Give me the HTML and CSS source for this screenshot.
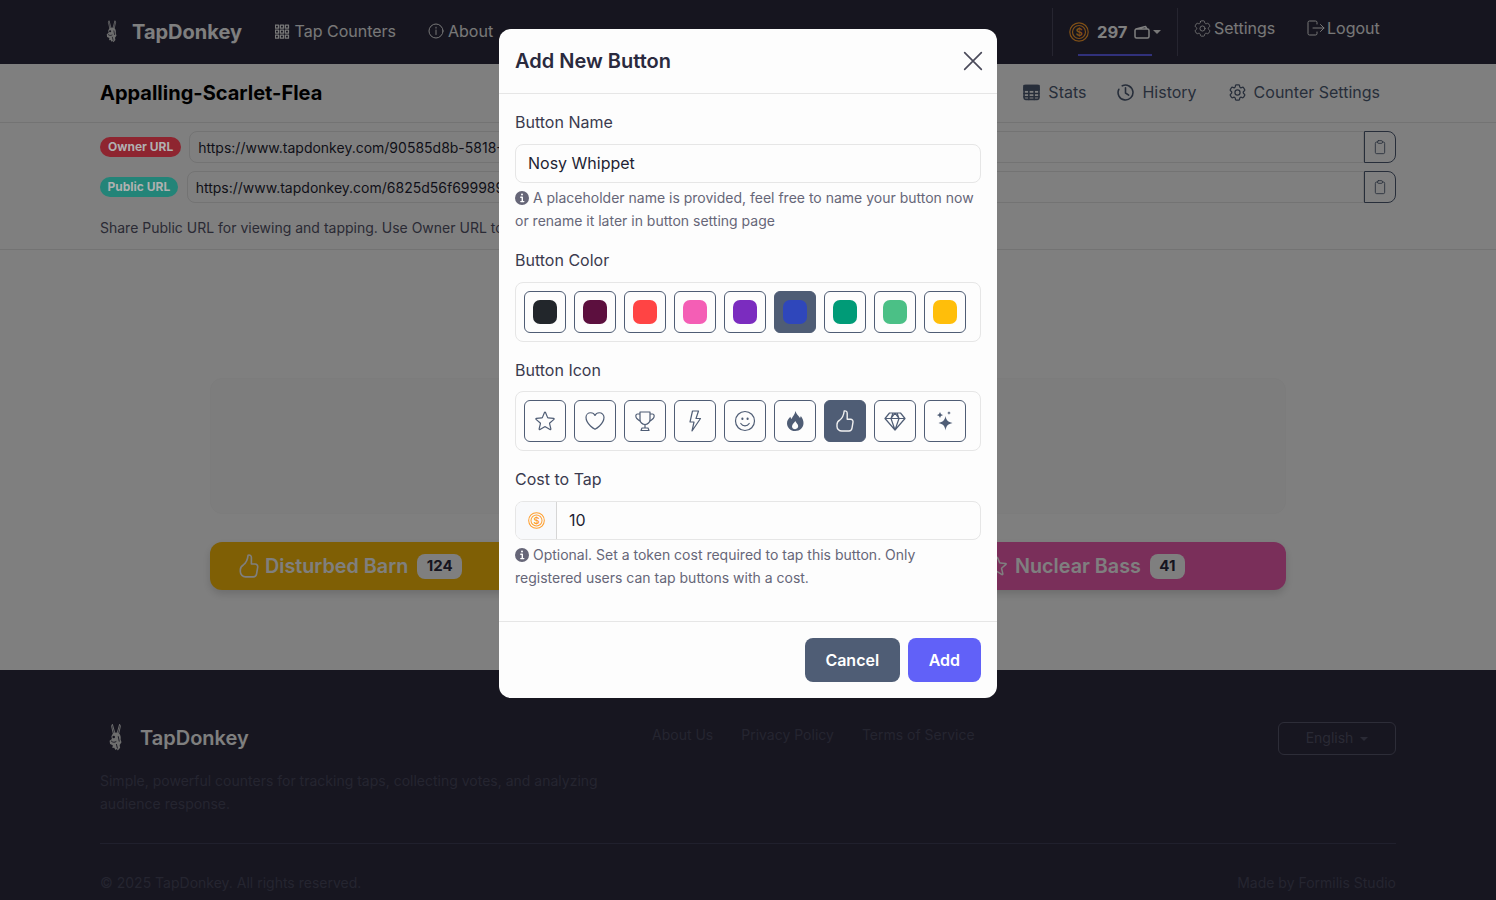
FILE: index.html
```html
<!DOCTYPE html>
<html lang="en">
<head>
    <meta charset="UTF-8">
    <meta name="viewport" content="width=device-width, initial-scale=1.0">
    <title>TapDonkey</title>
    <link rel="stylesheet" href="styles.css">
</head>
<body>
    <!-- shared icons -->
    <svg class="icon-defs" width="0" height="0">
        <symbol id="i-gear" viewBox="2 2 20 20"><path d="M9.594 3.94c.09-.542.56-.94 1.11-.94h2.593c.55 0 1.02.398 1.11.94l.213 1.281c.063.374.313.686.645.87.074.04.147.083.22.127.325.196.72.257 1.075.124l1.217-.456a1.125 1.125 0 0 1 1.37.49l1.296 2.247a1.125 1.125 0 0 1-.26 1.431l-1.003.827c-.293.241-.438.613-.43.992a7.723 7.723 0 0 1 0 .255c-.008.378.137.75.43.991l1.004.827c.424.35.534.955.26 1.43l-1.298 2.247a1.125 1.125 0 0 1-1.369.491l-1.217-.456c-.355-.133-.75-.072-1.076.124a6.47 6.47 0 0 1-.22.128c-.331.183-.581.495-.644.869l-.213 1.281c-.09.543-.56.94-1.11.94h-2.594c-.55 0-1.019-.398-1.11-.94l-.213-1.281c-.062-.374-.312-.686-.644-.87a6.52 6.52 0 0 1-.22-.127c-.325-.196-.72-.257-1.076-.124l-1.217.456a1.125 1.125 0 0 1-1.369-.49l-1.297-2.247a1.125 1.125 0 0 1 .26-1.431l1.004-.827c.292-.24.437-.613.43-.991a6.932 6.932 0 0 1 0-.255c.007-.38-.138-.751-.43-.992l-1.004-.827a1.125 1.125 0 0 1-.26-1.43l1.297-2.247a1.125 1.125 0 0 1 1.37-.491l1.216.456c.356.133.751.072 1.076-.124.072-.044.146-.086.22-.128.332-.183.582-.495.644-.869l.214-1.28Z"/><circle cx="12" cy="12" r="3"/></symbol>
        <symbol id="i-clip" viewBox="0 0 24 24"><path d="M8.500 4.500H7a2 2 0 0 0-2 2V20a2 2 0 0 0 2 2h10a2 2 0 0 0 2-2V6.500a2 2 0 0 0-2-2h-1.500"/><rect x="8.500" y="2.500" width="7" height="4" rx="1"/></symbol>
        <symbol id="i-thumb" viewBox="0 0 24 24"><path d="M11.200 2c1.500-.5 3 .4 3 2.200v6h3.400c1.600 0 2.700 1.400 2.400 3l-1 6c-.3 1.600-1.600 2.800-3 2.800H8.800C6.300 22 4 20 4 17.400v-2c0-2 1-3.400 3-4.600C9.500 9 10.700 6 11.200 2Z"/></symbol>
        <symbol id="i-star" viewBox="0 0 24 24"><path d="M11.480 3.499a.562.562 0 0 1 1.040 0l2.125 5.111a.563.563 0 0 0 .475.345l5.518.442c.499.04.701.663.321.988l-4.204 3.602a.563.563 0 0 0-.182.557l1.285 5.385a.562.562 0 0 1-.84.61l-4.725-2.885a.562.562 0 0 0-.586 0L6.982 20.540a.562.562 0 0 1-.84-.61l1.285-5.386a.562.562 0 0 0-.182-.557l-4.204-3.602a.562.562 0 0 1 .321-.988l5.518-.442a.563.563 0 0 0 .475-.345L11.480 3.500Z"/></symbol>
        <symbol id="i-info" viewBox="1 1 14 14"><circle cx="8" cy="8" r="7" fill="currentColor" stroke="none"/><circle cx="8" cy="4.600" r="1" fill="#fff" stroke="none"/><path d="M6.800 7.200H8.300V11.400M6.800 11.600H9.800" stroke="#fff" stroke-width="1.400" fill="none"/></symbol>
        <symbol id="i-donkey" viewBox="0 0 24 32">
            <path d="M8.200 1.500 10.500 10 9 11 7.300 3.500ZM15.800 1.500 13.500 10 15 11 16.700 3.500Z" fill="none" stroke="#e8e8e8" stroke-width="1"/>
            <path d="M8.500 11c2-1.500 5-1.500 7 0 1.500 1.500 2 4 1.500 6.500l1 3-2 3 .5 3-2.500 3-1-1.500-1.500 1-1.500-2.500-2 .5.5-3-3-1.500-.5-3.500 2.500-2-.5-3Z" fill="#dcdcdc" stroke="none"/>
            <circle cx="9.500" cy="15" r="1.400" fill="#2c2a3e" stroke="none"/>
            <path d="M7 19.500c1.500 1.500 3.500 1.500 5 .5M14.500 14.500l1 5M12.500 23l1 4" fill="none" stroke="#2c2a3e" stroke-width="1"/>
        </symbol>
    </svg>

    <nav class="topbar">
        <div class="topbar-left">
            <a class="brand">
                <svg width="18" height="24"><use href="#i-donkey"/></svg>
                <span>TapDonkey</span>
            </a>
            <a class="top-link">
                <svg class="icon-sm" viewBox="0 0 16 16" width="16" height="16">
                    <path d="M1.500 2h2.500v2.500h-2.500zM5.500 2h2.500v2.500h-2.500zM9.500 2h2.500v2.500h-2.500zM1.500 6h2.500v2.500h-2.500zM5.500 6h2.500v2.500h-2.500zM9.500 6h2.500v2.500h-2.500zM1.500 10h2.500v2.500h-2.500zM5.500 10h2.500v2.500h-2.500zM9.500 10h2.500v2.500h-2.500z" transform="translate(-1.500 -.5) scale(1.250)"/>
                </svg>
                Tap Counters
            </a>
            <a class="top-link">
                <svg class="icon-sm" viewBox="0 0 16 16" width="16" height="16">
                    <circle cx="8" cy="8" r="7"/><path d="M8 7v4.500M8 4.200v1"/>
                </svg>
                About
            </a>
        </div>
        <div class="topbar-right">
            <div class="wallet">
                <svg class="coin" viewBox="0 0 20 20" width="20" height="20">
                    <circle cx="10" cy="10" r="9.200"/><circle cx="10" cy="10" r="6.500"/>
                    <text x="10" y="13.700" text-anchor="middle">$</text>
                </svg>
                <span class="wallet-num">297</span>
                <svg class="wallet-icon" viewBox="0 0 16 14" width="16" height="14">
                    <path d="M1 5.500a1.500 1.500 0 0 1 1.500-1.500H13.500a1.500 1.500 0 0 1 1.500 1.500V11.500a1.500 1.500 0 0 1-1.500 1.500H2.500A1.500 1.500 0 0 1 1 11.500ZM2 4 11.500 1.500l1.500 2.500"/>
                </svg>
                <span class="caret"></span>
            </div>
            <a class="top-link top-link-right">
                <svg class="icon-sm" width="17" height="17"><use href="#i-gear"/></svg>
                Settings
            </a>
            <a class="top-link top-link-right">
                <svg class="icon-sm" viewBox="0 0 18 16" width="18" height="16">
                    <path d="M10 4V2.500A1.500 1.500 0 0 0 8.500 1H2.500A1.500 1.500 0 0 0 1 2.500V13.500A1.500 1.500 0 0 0 2.500 15H8.500A1.500 1.500 0 0 0 10 13.500V12M6 8h11M13.500 4.500 17 8l-3.500 3.500"/>
                </svg>
                Logout
            </a>
        </div>
    </nav>

    <header class="counter-head">
        <h1>Appalling-Scarlet-Flea</h1>
        <div class="counter-tabs">
            <a class="tab">
                <svg viewBox="0 0 16 16" width="17" height="17"><rect x="1" y="1.500" width="14" height="13" rx="1.500"/><path d="M1 5.500h14M1 9h14M1 12h14M5.500 5.500v9M10.500 5.500v9"/><path class="tab-fill" d="M1 1.500h14v4H1z"/></svg>
                Stats
            </a>
            <a class="tab">
                <svg viewBox="0 0 16 16" width="17" height="17"><path d="M5 1.700A7 7 0 1 1 1.700 5"/><path d="M8 3.500V8.500l3 2"/></svg>
                History
            </a>
            <a class="tab">
                <svg width="17" height="17"><use href="#i-gear"/></svg>
                Counter Settings
            </a>
        </div>
    </header>

    <section class="share">
        <div class="url-row">
            <span class="badge badge-owner">Owner URL</span>
            <input class="url-input" type="text" value="https://www.tapdonkey.com/90585d8b-5818-4e0a-9c1d-6f2b7a3e1c44">
            <button class="copy-btn"><svg width="16" height="16"><use href="#i-clip"/></svg></button>
        </div>
        <div class="url-row">
            <span class="badge badge-public">Public URL</span>
            <input class="url-input" type="text" value="https://www.tapdonkey.com/6825d56f699989a1c2e40b7d">
            <button class="copy-btn"><svg width="16" height="16"><use href="#i-clip"/></svg></button>
        </div>
        <p class="share-note">Share Public URL for viewing and tapping. Use Owner URL to manage this counter, keep it safe as it contains login information.</p>
    </section>

    <main class="counter-main">
        <div class="chart-box"></div>
        <div class="tap-grid">
            <button class="tap-btn tap-amber">
                <svg width="26" height="26"><use href="#i-thumb"/></svg>
                <span>Disturbed Barn</span>
                <span class="tap-count">124</span>
            </button>
            <button class="tap-btn tap-pink">
                <svg width="24" height="24"><use href="#i-star"/></svg>
                <span>Nuclear Bass</span>
                <span class="tap-count">41</span>
            </button>
        </div>
    </main>

    <footer class="footer">
        <div class="footer-top">
            <div class="footer-about">
                <div class="footer-brand">
                    <svg width="22" height="30"><use href="#i-donkey"/></svg>
                    <span>TapDonkey</span>
                </div>
                <p>Simple, powerful counters for tracking taps, collecting votes, and analyzing audience response.</p>
            </div>
            <div class="footer-links">
                <a>About Us</a>
                <a>Privacy Policy</a>
                <a>Terms of Service</a>
            </div>
            <button class="lang-btn">English <span class="caret"></span></button>
        </div>
        <div class="footer-bottom">
            <span>© 2025 TapDonkey. All rights reserved.</span>
            <span>Made by Formilis Studio</span>
        </div>
    </footer>

    <div class="backdrop"></div>

    <div class="modal">
        <div class="modal-head">
            <h2>Add New Button</h2>
            <button class="modal-close">
                <svg viewBox="0 0 18 18" width="20" height="20"><path d="M1.500 1.500l15 15M16.500 1.500l-15 15"/></svg>
            </button>
        </div>
        <div class="modal-body">
            <div class="field">
                <label>Button Name</label>
                <input class="text-input" type="text" value="Nosy Whippet">
                <p class="help"><svg width="14" height="14"><use href="#i-info"/></svg> A placeholder name is provided, feel free to name your button now or rename it later in button setting page</p>
            </div>
            <div class="field">
                <label>Button Color</label>
                <div class="picker">
                    <button class="pick"><span class="swatch sw-dark"></span></button>
                    <button class="pick"><span class="swatch sw-plum"></span></button>
                    <button class="pick"><span class="swatch sw-red"></span></button>
                    <button class="pick"><span class="swatch sw-pink"></span></button>
                    <button class="pick"><span class="swatch sw-purple"></span></button>
                    <button class="pick active"><span class="swatch sw-blue"></span></button>
                    <button class="pick"><span class="swatch sw-teal"></span></button>
                    <button class="pick"><span class="swatch sw-green"></span></button>
                    <button class="pick"><span class="swatch sw-yellow"></span></button>
                </div>
            </div>
            <div class="field">
                <label class="label-tight">Button Icon</label>
                <div class="picker">
                    <button class="pick"><svg width="24" height="24"><use href="#i-star"/></svg></button>
                    <button class="pick"><svg viewBox="0 0 24 24" width="24" height="24"><path d="M21 8.250c0-2.485-2.099-4.500-4.688-4.500-1.935 0-3.597 1.126-4.312 2.733-.715-1.607-2.377-2.733-4.313-2.733C5.100 3.750 3 5.765 3 8.250c0 7.220 9 12 9 12s9-4.780 9-12Z"/></svg></button>
                    <button class="pick"><svg viewBox="0 0 24 24" width="24" height="24"><path d="M7 3h10v7.500a5 5 0 0 1-10 0ZM7 5H4.500C2.500 5 2.300 8 3.800 9.500 4.800 10.500 6 11.500 7.500 12.500M17 5h2.500c2 0 2.200 3 .7 4.500-1 1-2.200 2-3.700 3M12 15.500V19M9 19h6l1 2.500H8Z"/></svg></button>
                    <button class="pick"><svg viewBox="0 0 24 24" width="24" height="24"><path d="M15.500 2H9.500L7 13h4l-2 9 8.500-12.500h-4.500Z"/></svg></button>
                    <button class="pick"><svg viewBox="0 0 24 24" width="24" height="24"><circle cx="12" cy="12" r="9.500"/><path d="M16.200 14.500a5 5 0 0 1-8.400 0"/><path class="dot" d="M8.300 9.800a1.100 1.300 0 1 0 2.200 0 1.100 1.300 0 1 0-2.200 0ZM13.500 9.800a1.100 1.300 0 1 0 2.200 0 1.100 1.300 0 1 0-2.200 0Z"/></svg></button>
                    <button class="pick"><svg viewBox="0 0 24 24" width="24" height="24"><path class="dot" fill-rule="evenodd" d="M12.500 2c.6 3 3 4.600 4.500 7 .4-.6.700-1.300.8-2 1.800 2.200 2.700 4.700 2.700 7 0 4.500-3.500 8-8.300 8S4 18.500 4 14.200c0-2.700 1.500-4.700 3.300-6.500 .3 1 .6 1.700 1.200 2.300C9.700 7.500 12 5 12.500 2ZM12.300 12c-.3 1.400-3.300 3-3.300 5.200 0 1.800 1.400 3 3.100 3s3.100-1.300 3.100-3.100c0-2.100-2.300-3.200-2.900-5.100Z"/></svg></button>
                    <button class="pick active"><svg width="24" height="24"><use href="#i-thumb"/></svg></button>
                    <button class="pick"><svg viewBox="0 0 24 24" width="24" height="24"><path d="M6.500 4h11L22 9.500 12 21 2 9.500ZM2 9.500h20M8 9.500 12 21l4-11.500M8 9.500 10 4M16 9.500 14 4M8 9.500 12 4.200l4 5.300"/></svg></button>
                    <button class="pick"><svg viewBox="0 0 24 24" width="24" height="24"><path class="dot" d="M12.500 7c.7 4.200 2.600 6.100 7 7-4.400.9-6.300 2.800-7 7.500-.7-4.700-2.600-6.600-7-7.500 4.400-.9 6.300-2.800 7-7ZM7 2.700c.4 2 1.300 2.900 3.300 3.300-2 .4-2.900 1.300-3.300 3.300-.4-2-1.300-2.900-3.300-3.300 2-.4 2.900-1.300 3.300-3.300ZM16 2c.2 1.200.8 1.800 2 2-1.200.2-1.800.8-2 2-.2-1.200-.8-1.800-2-2 1.200-.2 1.800-.8 2-2Z"/></svg></button>
                </div>
            </div>
            <div class="field field-last">
                <label>Cost to Tap</label>
                <div class="input-group">
                    <span class="input-addon">
                        <svg class="coin coin-sm" viewBox="0 0 20 20" width="17" height="17">
                            <circle cx="10" cy="10" r="9.200"/><circle cx="10" cy="10" r="6.500"/>
                            <text x="10" y="13.700" text-anchor="middle">$</text>
                        </svg>
                    </span>
                    <input class="group-input" type="text" value="10">
                </div>
                <p class="help"><svg width="14" height="14"><use href="#i-info"/></svg> Optional. Set a token cost required to tap this button. Only registered users can tap buttons with a cost.</p>
            </div>
        </div>
        <div class="modal-foot">
            <button class="btn btn-cancel">Cancel</button>
            <button class="btn btn-add">Add</button>
        </div>
    </div>
</body>
</html>
```

FILE: styles.css
```css
* {
    box-sizing: border-box;
}
html, body {
    margin: 0;
    padding: 0;
}
body {
    font-family: Inter, "Liberation Sans", sans-serif;
    background-color: #fff;
    color: #1f1f33;
    position: relative;
}
svg {
    fill: none;
    stroke: currentColor;
    stroke-width: 1.5;
    stroke-linecap: round;
    stroke-linejoin: round;
    flex-shrink: 0;
}
.icon-defs {
    position: absolute;
}
button {
    font-family: inherit;
    cursor: pointer;
}

/* top nav */
.topbar {
    height: 64px;
    background-color: #2c2a3e;
    padding: 0 100px;
    display: flex;
    justify-content: space-between;
    color: #f0f0f0;
}
.topbar-left {
    display: flex;
    align-items: center;
}
.brand {
    display: flex;
    align-items: center;
    gap: 11px;
    padding-left: 3px;
    font-size: 20px;
    font-weight: 700;
    color: #fff;
    margin-right: 32.5px;
}
.top-link {
    display: flex;
    align-items: center;
    gap: 4px;
    font-size: 16px;
    color: #f0f0f0;
    margin-right: 32px;
    margin-top: -2px;
}
.icon-sm {
    stroke-width: 1;
}
.topbar-right {
    display: flex;
    align-items: center;
}
.wallet {
    height: 48px;
    margin-top: 8px;
    margin-bottom: 8px;
    border-left: 1px solid #4c4a60;
    border-right: 1px solid #4c4a60;
    padding: 0 16px;
    width: 126px;
    display: flex;
    align-items: center;
    position: relative;
}
.wallet::after {
    content: "";
    position: absolute;
    left: 25px;
    bottom: 0;
    width: 74px;
    height: 2px;
    background-color: #6363f7;
}
.coin {
    stroke: #ff9f2e;
    stroke-width: 1.2;
}
.coin text {
    fill: #ff9f2e;
    stroke: none;
    font-size: 11px;
    font-weight: 600;
    font-family: Inter, sans-serif;
}
.wallet-num {
    font-size: 16.5px;
    font-weight: 700;
    color: #fff;
    margin-left: 8px;
    margin-right: 7px;
}
.wallet-icon {
    stroke: #fff;
}
.caret {
    display: inline-block;
    width: 0;
    height: 0;
    border-left: 4px solid transparent;
    border-right: 4px solid transparent;
    border-top: 4px solid currentColor;
    margin-left: 3px;
    vertical-align: middle;
}
.top-link-right {
    margin: -8px 0 0 16px;
    gap: 3px;
    width: 97px;
}
.top-link-right:last-child {
    margin-left: 16px;
    width: 73px;
    margin-right: 16px;
    gap: 2px;
}

/* counter header */
.counter-head {
    height: 59px;
    padding: 0 100px;
    display: flex;
    align-items: center;
    justify-content: space-between;
    border-bottom: 1px solid #e6e6e6;
    background-color: #fff;
}
.counter-head h1 {
    margin: 0;
    font-size: 20px;
    font-weight: 700;
    color: #000;
}
.counter-tabs {
    display: flex;
    gap: 32px;
    padding-right: 16px;
    padding-bottom: 2px;
}
.tab {
    display: flex;
    align-items: center;
    gap: 8px;
    font-size: 16px;
    color: #4f5d75;
}
.tab:first-child {
    margin-right: -1px;
}
.tab-fill {
    fill: currentColor;
}

/* share urls */
.share {
    padding: 8px 100px 0;
    height: 127px;
    border-bottom: 1px solid #e6e6e6;
}
.url-row {
    display: flex;
    align-items: center;
    height: 32px;
    margin-bottom: 8px;
}
.badge {
    font-size: 12px;
    font-weight: 700;
    height: 20px;
    line-height: 20px;
    padding: 0 8px;
    border-radius: 10px;
    color: #b0b0b0;
    margin-right: 8px;
    position: relative;
    z-index: 11;
}
.badge-owner {
    background-color: #8e2530;
}
.badge-public {
    background-color: #238478;
    padding: 0 7.5px;
    margin-right: 9px;
}
.url-input {
    flex: 1;
    height: 32px;
    border: 1px solid #e6e6e6;
    border-radius: 8px 0 0 8px;
    padding: 0 8px;
    font-family: inherit;
    font-size: 14px;
    color: #1f1f33;
    background-color: #fff;
    min-width: 0;
}
.copy-btn {
    width: 32px;
    height: 32px;
    border: 1px solid #4f5d75;
    border-radius: 0 8px 8px 0;
    background-color: #fff;
    color: #4f5d75;
    padding: 0;
    display: flex;
    align-items: center;
    justify-content: center;
}
.copy-btn svg {
    stroke-width: 1.3;
}
.share-note {
    margin: 14px 0 0;
    font-size: 14px;
    line-height: 22px;
    color: #55556a;
}

/* main */
.counter-main {
    height: 420px;
    background-color: #fff;
    padding: 128px 210px 0;
}
.chart-box {
    height: 136px;
    border-radius: 12px;
    background-color: #fbfbfb;
    border: 1px solid #f8f8f8;
}
.tap-grid {
    display: flex;
    justify-content: space-between;
    margin-top: 28px;
}
.tap-btn {
    width: 348px;
    height: 48px;
    border: none;
    border-radius: 12px;
    display: flex;
    align-items: center;
    gap: 3px;
    padding: 0 0 0 26px;
    font-size: 19.75px;
    font-weight: 600;
    color: #fff;
    box-shadow: 0 4px 8px rgba(0, 0, 0, 0.15);
}
.tap-amber {
    background-color: #ffbe0a;
}
.tap-pink {
    background-color: #f45eb5;
    padding-left: 47px;
}
.tap-pink svg {
    margin-right: 3px;
}
.tap-count {
    font-size: 15px;
    font-weight: 700;
    background-color: #fff;
    color: #2c2a3e;
    border-radius: 8px;
    height: 25px;
    line-height: 24px;
    padding: 0 9.5px;
    margin-left: 6px;
}

/* footer */
.footer {
    height: 230px;
    background-color: #2e2c40;
    padding: 52px 100px 0;
    color: #4a4a60;
    font-size: 14px;
}
.footer-top {
    display: flex;
    align-items: flex-start;
    height: 122px;
    border-bottom: 1px solid #40405a;
}
.footer-about {
    width: 552px;
}
.footer-about p {
    margin: 16px 0 0;
    width: 510px;
    line-height: 23px;
    font-size: 14px;
}
.footer-brand {
    display: flex;
    align-items: center;
    gap: 13px;
    padding-left: 5px;
    padding-top: 1px;
    font-size: 20px;
    font-weight: 600;
    color: #fff;
}
.footer-links {
    display: flex;
    gap: 28px;
    margin-top: 4px;
    flex: 1;
}
.lang-btn {
    width: 118px;
    height: 33px;
    border: 1px solid #5a5a70;
    border-radius: 6px;
    background: none;
    color: #55556a;
    font-size: 14px;
    padding-bottom: 4px;
}
.footer-bottom {
    display: flex;
    justify-content: space-between;
    margin-top: 30px;
}

/* modal */
.backdrop {
    position: absolute;
    inset: 0;
    background-color: rgba(0, 0, 0, 0.5);
    z-index: 10;
}
.modal {
    position: absolute;
    left: 499px;
    top: 29px;
    width: 498px;
    height: 669px;
    background-color: #fdfdfd;
    border-radius: 12px;
    z-index: 20;
    display: flex;
    flex-direction: column;
}
.modal-head {
    height: 65px;
    padding: 0 16px;
    border-bottom: 1px solid #e6e6e6;
    display: flex;
    align-items: center;
    justify-content: space-between;
}
.modal-head h2 {
    margin: 0;
    font-size: 20px;
    font-weight: 600;
    color: #2a2a3e;
}
.modal-close {
    border: none;
    background: none;
    padding: 0;
    margin-right: -2px;
    color: #4a4a5a;
    display: flex;
}
.modal-body {
    padding: 16px 16px 0;
    flex: 1;
}
.field {
    margin-bottom: 16px;
}
.field-last {
    margin-bottom: 0;
}
.field label {
    display: block;
    font-size: 16px;
    line-height: 24px;
    color: #3a3a4e;
    margin-bottom: 10px;
}
.field .label-tight {
    margin-bottom: 9px;
}
.text-input, .input-group {
    width: 100%;
    height: 39px;
    border: 1px solid #e6e6e6;
    border-radius: 8px;
    font-family: inherit;
    font-size: 16px;
    color: #1f1f33;
    background-color: #fdfdfd;
}
.text-input {
    padding: 0 12px 2px;
    display: block;
}
.input-group {
    display: flex;
    overflow: hidden;
}
.input-addon {
    width: 41px;
    background-color: #f8f9fb;
    border-right: 1px solid #d6d6d6;
    display: flex;
    align-items: center;
    justify-content: center;
}
.group-input {
    flex: 1;
    border: none;
    padding: 0 12px 2px;
    font-family: inherit;
    font-size: 16px;
    color: #1f1f33;
    background: none;
}
.help {
    margin: 3px 0 0;
    font-size: 14px;
    line-height: 23px;
    color: #666678;
}
.help svg {
    vertical-align: -2px;
}
.picker {
    display: flex;
    gap: 8px;
    height: 60px;
    padding: 8px;
    border: 1px solid #e6e6e6;
    border-radius: 8px;
}
.pick {
    width: 42px;
    height: 42px;
    padding: 0;
    background-color: #fdfdfd;
    border: 1px solid #4f5d75;
    border-radius: 6px;
    color: #4f5d75;
    display: flex;
    align-items: center;
    justify-content: center;
}
.pick svg {
    stroke-width: 1.2;
}
.pick .dot {
    fill: currentColor;
    stroke: none;
}
.pick.active {
    background-color: #4f5d75;
    color: #f0f0f0;
}
.pick.active svg {
    stroke-width: 1.4;
}
.swatch {
    width: 24px;
    height: 24px;
    border-radius: 7px;
}
.sw-dark { background-color: #22262b; }
.sw-plum { background-color: #5c0f3e; }
.sw-red { background-color: #ff4444; }
.sw-pink { background-color: #f45eb5; }
.sw-purple { background-color: #7b2cbf; }
.sw-blue { background-color: #2f47bb; }
.sw-teal { background-color: #009b77; }
.sw-green { background-color: #4bc086; }
.sw-yellow { background-color: #ffbe0a; }
.modal-foot {
    height: 77px;
    border-top: 1px solid #e6e6e6;
    padding: 16px;
    display: flex;
    justify-content: flex-end;
    gap: 8px;
}
.btn {
    height: 44px;
    border: none;
    border-radius: 8px;
    font-size: 16px;
    font-weight: 600;
    color: #fff;
    padding: 0 21px;
}
.btn-cancel {
    background-color: #4f5d75;
    padding: 0 20.5px;
}
.btn-add {
    background-color: #6161f8;
}
```
